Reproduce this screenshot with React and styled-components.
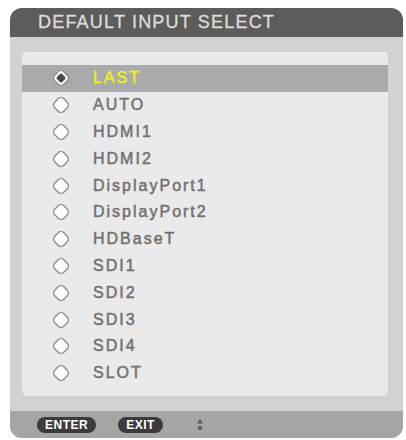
import React from 'react';
import styled, { createGlobalStyle } from 'styled-components';

const inputs = [
  'LAST', 'AUTO', 'HDMI1', 'HDMI2', 'DisplayPort1', 'DisplayPort2',
  'HDBaseT', 'SDI1', 'SDI2', 'SDI3', 'SDI4', 'SLOT',
];

function Radio({ checked }) {
  return (
    <RadioIcon viewBox="0 0 18 18" width="18" height="18">
      <rect x="2.6" y="2.6" width="12.8" height="12.8" rx="4" transform="rotate(45 9 9)"
        fill="#fff" stroke="#8c8c8c" strokeWidth="1.4" />
      {checked && (
        <rect x="5.4" y="5.4" width="7.2" height="7.2" rx="1.6" transform="rotate(45 9 9)" fill="#4a4a4a" />
      )}
    </RadioIcon>
  );
}

function App() {
  const current = 0;

  return (
    <React.Fragment>
      <Global />
      <Page>
        <Panel>
          <Header>DEFAULT INPUT SELECT</Header>
          <Body>
            <List>
              {inputs.map((name, i) => (
                <Row key={name} active={i === current}>
                  <Radio checked={i === current} />
                  <Label active={i === current}>{name}</Label>
                </Row>
              ))}
            </List>
          </Body>
          <Footer>
            <Key>ENTER</Key>
            <Key>EXIT</Key>
            <svg width="8" height="14" viewBox="0 0 8 14">
              <path d="M4 1 L7 5.5 L1 5.5 Z" fill="#555" />
              <path d="M4 13 L7 8.5 L1 8.5 Z" fill="#555" />
            </svg>
          </Footer>
        </Panel>
      </Page>
    </React.Fragment>
  );
}

const Global = createGlobalStyle`
  body {
    margin: 0;
    background: #fff;
    font-family: "Liberation Sans", Arial, sans-serif;
  }
`;

const Page = styled.div`
  padding: 8px 3px 0 10px;
`;

const Panel = styled.div`
  width: 393px;
  height: 430px;
  border-radius: 12px;
  overflow: hidden;
  background: #d2d2d2;
  display: flex;
  flex-direction: column;
`;

const Header = styled.div`
  height: 29px;
  flex-shrink: 0;
  background: #5c5c5a;
  color: #dcdcdc;
  font-size: 18px;
  letter-spacing: 1.2px;
  -webkit-text-stroke: 0.3px #dcdcdc;
  padding-left: 28px;
  display: flex;
  align-items: center;
`;

const Body = styled.div`
  flex: 1;
  padding: 15px 15px 15px 12px;
  display: flex;
`;

const List = styled.div`
  flex: 1;
  background: #eaeaea;
  border-radius: 6px;
  box-shadow: inset 0 1px 0 #f4f4f4;
  padding: 13px 0 9px;
`;

const Row = styled.div`
  height: 26.8px;
  display: flex;
  align-items: center;
  padding-left: 30px;
  background: ${(p) => (p.active ? '#aaaaaa' : 'transparent')};
`;

const RadioIcon = styled.svg`
  flex-shrink: 0;
`;

const Label = styled.span`
  margin-left: 23px;
  font-size: 16px;
  letter-spacing: 2px;
  color: ${(p) => (p.active ? '#f0f022' : '#727272')};
  -webkit-text-stroke: 0.5px ${(p) => (p.active ? '#f0f022' : '#727272')};
`;

const Footer = styled.div`
  height: 28px;
  flex-shrink: 0;
  background: #a5a5a5;
  display: flex;
  align-items: center;
  gap: 22px;
  padding-left: 27px;

  svg {
    margin-left: 11px;
  }
`;

const Key = styled.span`
  height: 16px;
  padding: 0 8px;
  border-radius: 8px;
  background: #3b3b3b;
  color: #fff;
  font-size: 12px;
  font-weight: bold;
  letter-spacing: 0.5px;
  display: flex;
  align-items: center;
`;

export default App;
